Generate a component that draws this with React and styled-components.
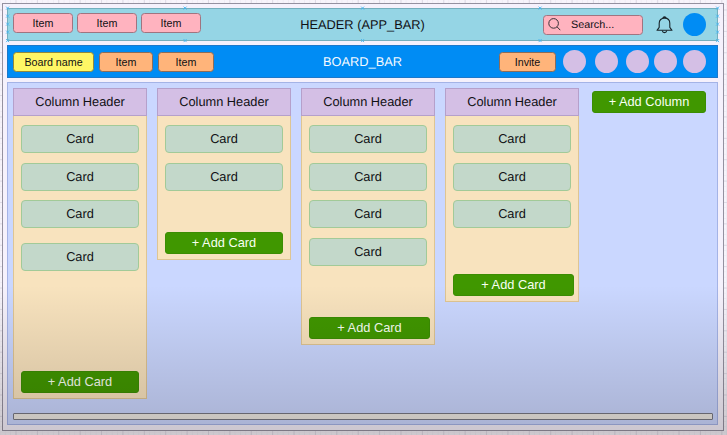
import React from "react";
import styled, { createGlobalStyle } from "styled-components";

const GlobalStyle = createGlobalStyle`
  *, *::before, *::after { box-sizing: border-box; }
  body { margin: 0; overflow: hidden; font-family: "Liberation Sans", Arial, sans-serif; color: #101014; text-rendering: geometricPrecision; }
`;

const Canvas = styled.div`
  position: relative;
  width: 727px;
  height: 435px;
  padding: 3px 3px 4px 2px;
  background-color: #f7f4fb;
  background-image:
    linear-gradient(90deg, #dedae5 1px, transparent 1px),
    linear-gradient(#dedae5 1px, transparent 1px),
    linear-gradient(90deg, #efecf4 1px, transparent 1px),
    linear-gradient(#efecf4 1px, transparent 1px);
  background-size: 21.4px 21.4px, 21.4px 21.4px, 5.35px 5.35px, 5.35px 5.35px;
  background-position: 15.5px 9.5px;
  overflow: hidden;

  &::after {
    content: "";
    position: absolute;
    inset: 0;
    background: linear-gradient(rgba(12, 0, 0, 0) 285px, rgba(12, 0, 0, 0.16) 420px, rgba(12, 0, 0, 0.18) 435px);
    pointer-events: none;
  }
`;

const Frame = styled.main`
  display: flex;
  flex-direction: column;
  gap: 4px;
  height: 428px;
  padding: 4px 5px 5px 4px;
  border: 1px solid #9491a0;
  background: #f5f1fc;
`;

const Bar = styled.header`
  position: relative;
  display: flex;
  align-items: center;
  flex: none;
  height: 33px;
  padding-left: 5px;
  border: 1px solid ${(p) => p.$edge};
  background: ${(p) => p.$fill};
  color: ${(p) => p.$ink};
`;

const BarTitle = styled.h1`
  position: absolute;
  inset: 0;
  display: flex;
  align-items: center;
  justify-content: center;
  margin: 0;
  font-size: 12.8px;
  font-weight: 400;
`;

const ButtonGroup = styled.div`
  display: flex;
  gap: ${(p) => p.$gap}px;
  padding-bottom: ${(p) => p.$lift || 0}px;
`;

const BarButton = styled.button`
  width: ${(p) => p.$width}px;
  height: 20px;
  padding: 0;
  border: 1px solid ${(p) => p.$edge};
  border-radius: 3.5px;
  background: ${(p) => p.$fill};
  color: #101014;
  font: 10.7px/18px "Liberation Sans", Arial, sans-serif;
`;

const Tools = styled.div`
  display: flex;
  align-items: center;
  margin-left: auto;
  padding-right: ${(p) => p.$end}px;
`;

const SearchBox = styled.div`
  display: flex;
  align-items: center;
  gap: 10px;
  width: 100px;
  height: 20px;
  padding-left: 4px;
  border: 1px solid #a07480;
  border-radius: 3.5px;
  background: #ffb3bf;
  font-size: 10.8px;
`;

const BellIcon = styled.svg`
  display: block;
  margin: 0 10.5px 0 12.5px;
`;

const Avatar = styled.span`
  width: 23px;
  height: 23px;
  margin-left: ${(p) => p.$before || 0}px;
  border-radius: 50%;
  background: ${(p) => p.$fill};
`;

const Handles = styled.svg`
  position: absolute;
  left: -4px;
  top: -4px;
  overflow: visible;
`;

const Board = styled.section`
  display: flex;
  flex-direction: column;
  justify-content: space-between;
  flex: 1;
  padding: 5px 4px 4px 5px;
  border: 1px solid #a4b3e6;
  background: #cad7ff;
`;

const Columns = styled.div`
  display: flex;
  align-items: flex-start;
  gap: 10px;
`;

const Column = styled.article`
  display: flex;
  flex-direction: column;
  width: 134px;
  height: ${(p) => p.$height}px;
  border: 1px solid #dec593;
  background: #f8e3be;
`;

const ColumnHeader = styled.h2`
  flex: none;
  height: 28px;
  margin: -1px -1px 0;
  border: 1px solid #b5a0cb;
  background: #d4bfe5;
  font-size: 12.8px;
  line-height: 26px;
  font-weight: 400;
  text-align: center;
`;

const CardList = styled.div`
  display: flex;
  flex-direction: column;
  gap: 9.5px;
  padding: 9px 7px 0;
`;

const Card = styled.div`
  height: 28px;
  margin-top: ${(p) => p.$offset || 0}px;
  border: 1px solid #a2ca98;
  border-radius: 4px;
  background: #c3d8ca;
  font-size: 12.8px;
  line-height: 26px;
  text-align: center;
`;

const AddButton = styled.button`
  flex: none;
  width: ${(p) => p.$width}px;
  height: 22px;
  margin: ${(p) => p.$margin};
  padding: 0;
  border: 1px solid #3b8d03;
  border-radius: 3px;
  background: #409700;
  color: #f8fff2;
  font: 12.8px/20px "Liberation Sans", Arial, sans-serif;
`;

const Scrollbar = styled.div`
  height: 7px;
  border: 1px solid #777984;
  border-radius: 1px;
  background: #edeae4;
`;

const handlePoints = [
  ...[0, 177.5, 355, 532.5, 710].flatMap((x) => [[x, 0], [x, 32.5]]),
  ...[8, 16, 24].flatMap((y) => [[0, y], [710, y]]),
];

const columns = [
  { height: 311, cards: [0, 0, 0, 5], addWidth: 118 },
  { height: 172, cards: [0, 0], addWidth: 118 },
  { height: 257, cards: [0, 0, 0, 0], addWidth: 121 },
  { height: 214, cards: [0, 0, 0], addWidth: 121 },
];

function SelectionHandles() {
  return (
    <Handles width="720" height="40" fill="none" stroke="#43b2ed" strokeWidth="0.9">
      {handlePoints.map(([x, y]) => (
        <path key={`${x}-${y}`} d={`M${x + 2.1} ${y + 1.6}l3 3m0-3l-3 3`} />
      ))}
    </Handles>
  );
}

export default function App() {
  return (
    <>
      <GlobalStyle />
      <Canvas>
        <Frame>
          <Bar $fill="#95d5e5" $edge="#74afbd" $ink="#101014">
            <BarTitle>HEADER (APP_BAR)</BarTitle>
            <ButtonGroup $gap={4} $lift={3}>
              {[0, 1, 2].map((i) => (
                <BarButton key={i} $width={60} $fill="#ffb3bf" $edge="#a07480">Item</BarButton>
              ))}
            </ButtonGroup>
            <Tools $end={11}>
              <SearchBox>
                <svg width="13" height="13" viewBox="0 0 13 13" fill="none" stroke="#383037" strokeWidth="1">
                  <circle cx="5.6" cy="5.4" r="4.8" />
                  <path d="M9.1 8.9L12.3 12.2" />
                </svg>
                Search...
              </SearchBox>
              <BellIcon width="17" height="18" viewBox="0 0 17 18" fill="none" stroke="#18242a" strokeWidth="1.1" strokeLinejoin="round">
                <path d="M7 2.2V1.6Q8.5 .2 10 1.6V2.2M3.2 11.3V7.2C3.2 4.1 5.3 2.1 8.5 2.1S13.8 4.1 13.8 7.2V11.3L16 14.3H1Z" />
                <path d="M6.2 14.5Q6.6 16.6 8.5 16.6T10.8 14.5" />
              </BellIcon>
              <Avatar $fill="#008cf4" />
            </Tools>
            <SelectionHandles />
          </Bar>

          <Bar as="section" $fill="#008cf4" $edge="#1d78ca" $ink="#f5faff">
            <BarTitle as="h2">BOARD_BAR</BarTitle>
            <ButtonGroup $gap={5}>
              <BarButton $width={81} $fill="#fff665" $edge="#90883d">Board name</BarButton>
              <BarButton $width={54} $fill="#ffb47a" $edge="#8d6c57">Item</BarButton>
              <BarButton $width={56} $fill="#ffb47a" $edge="#8d6c57">Item</BarButton>
            </ButtonGroup>
            <Tools $end={11}>
              <BarButton $width={57} $fill="#ffb47a" $edge="#8d6c57">Invite</BarButton>
              {[7, 8.5, 8.5, 5, 6].map((before, i) => (
                <Avatar key={i} $before={before} $fill="#d4bfe5" />
              ))}
            </Tools>
          </Bar>

          <Board>
            <Columns>
              {columns.map((column, i) => (
                <Column key={i} $height={column.height}>
                  <ColumnHeader>Column Header</ColumnHeader>
                  <CardList>
                    {column.cards.map((offset, j) => (
                      <Card key={j} $offset={offset}>Card</Card>
                    ))}
                  </CardList>
                  <AddButton $width={column.addWidth} $margin="auto 0 5px 7px">+ Add Card</AddButton>
                </Column>
              ))}
              <AddButton $width={114} $margin="3px 0 0 3px">+ Add Column</AddButton>
            </Columns>
            <Scrollbar />
          </Board>
        </Frame>
      </Canvas>
    </>
  );
}
